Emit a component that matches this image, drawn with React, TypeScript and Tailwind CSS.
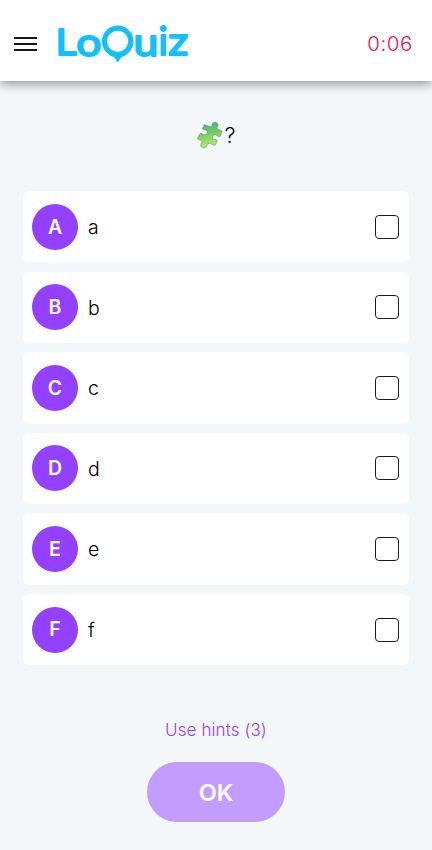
const answers = ["a", "b", "c", "d", "e", "f"];

function Logo() {
  return (
    <svg
      className="ml-[21px] h-[40px] w-[132px] shrink-0 overflow-visible font-['Lato',sans-serif]"
      viewBox="58 24 132 40"
      fill="#10c0ff"
      stroke="#10c0ff"
      strokeLinejoin="round"
      role="img"
    >
      <g strokeWidth="1.9">
        <text x="55.6" y="55.4" fontSize="36.5" textLength="21" lengthAdjust="spacingAndGlyphs">L</text>
        <text x="76.2" y="55.6" fontSize="39" textLength="25.2" lengthAdjust="spacingAndGlyphs">o</text>
        <text x="133.4" y="55.6" fontSize="39" textLength="24.8" lengthAdjust="spacingAndGlyphs">u</text>
        <text x="158.4" y="55.4" fontSize="38" textLength="9.3" lengthAdjust="spacingAndGlyphs">i</text>
        <text x="168.2" y="55.4" fontSize="39" textLength="20" lengthAdjust="spacingAndGlyphs">z</text>
      </g>
      <circle cx="117.7" cy="41.3" r="13.2" fill="none" strokeWidth="5.2" />
      <path d="M110.5 55 Q115 56 116.5 60.5 Q117.7 63 118.9 60.5 Q120.5 56 125 55Z" strokeWidth="0.7" />
    </svg>
  );
}

function Puzzle() {
  return (
    <svg className="h-[28px] w-[28px]" viewBox="0 0 28 28">
      <defs>
        <linearGradient id="leaf" x1="0" y1="0" x2="0.15" y2="1">
          <stop offset="0" stopColor="#45ab76" />
          <stop offset="0.5" stopColor="#7acd62" />
          <stop offset="1" stopColor="#aeea6c" />
        </linearGradient>
      </defs>
      <path
        d="M8.5 3.6 L13.4 5.4 C15.2 6 16 5 16.2 3.6 C16.6 1.2 18.4 .8 20.2 1.6 C22.2 2.6 22.4 4.2 21.6 5.6 C20.8 6.9 21 7.6 22.2 8.3 L26.3 10.3 L24.4 14.6 C23.6 16.2 22.4 16 21.2 14.8 C19.6 13.2 17.2 13.4 16.6 15.4 C16 17.3 17.1 18.8 19 18.6 C20.7 18.4 21.7 19.4 21 20.8 L19 24.6 L14.4 22.6 C12.6 21.9 11.7 22.6 11 24.3 C10 26.9 8 27.5 6.2 26.6 C4.2 25.5 4.4 23.5 5.5 22.2 C6.4 21 6.1 20.1 5 19.5 L1.4 17.6 L3.4 13.4 C4.2 11.9 5.4 12.1 6.7 13.1 C8.4 14.4 10.7 13.6 11.2 11.8 C11.7 9.9 10.6 8.8 8.8 8.9 C6.8 9 6.2 7.9 6.9 6.4Z"
        fill="url(#leaf)"
        stroke="#4f8f5c"
        strokeWidth="0.5"
      />
    </svg>
  );
}

export default function App() {
  return (
    <div className="flex h-[850px] w-[432px] flex-col overflow-hidden bg-[#f3f7fa] font-['Inter','Liberation_Sans',sans-serif] text-black">
      <header className="flex h-[81px] shrink-0 items-center bg-white pr-[19px] pl-[14px] pb-[1px] shadow-[0_3px_10px_rgba(0,0,0,0.4)]">
        <button className="mt-[7px] flex w-[23px] flex-col gap-[4px]" aria-label="Menu">
          <span className="h-[2px] w-full bg-[#17171b]" />
          <span className="h-[2px] w-full bg-[#17171b]" />
          <span className="h-[2px] w-full bg-[#17171b]" />
        </button>
        <div className="mt-[8px] flex"><Logo /></div>
        <span className="mt-[8px] ml-auto text-[20.5px] font-light tracking-[0.6px] text-[#f20d50]">0:06</span>
      </header>

      <main className="flex flex-1 flex-col items-center">
        <div className="mt-[39px] flex h-[30px] w-full items-center justify-center text-[22px] font-light">
          <Puzzle />
          <span>?</span>
        </div>
        <div className="mt-[41px] flex w-[386px] flex-col gap-[9.2px]">
          {answers.map((answer) => (
            <label key={answer} className="flex h-[71.4px] items-center rounded-[6px] bg-white pr-[10px] pl-[9px]">
              <span className="flex h-[46px] w-[46px] items-center justify-center rounded-full bg-[#9340ff] pt-[1px] text-[19.5px] font-semibold text-white uppercase">
                {answer}
              </span>
              <span className="ml-[10px] pt-[2px] text-[19.5px] font-light">{answer}</span>
              <span className="ml-auto h-[24px] w-[24px] rounded-[4px] border border-[#1b1b1b]" />
            </label>
          ))}
        </div>
        <button className="mt-[52px] h-[26px] text-[17px] leading-[26px] font-light tracking-[0.1px] text-[#9340ff]">Use hints (3)</button>
        <button className="mt-[19px] h-[60px] w-[138px] rounded-full bg-[#c29dfd] text-[23.5px] font-semibold text-white">OK</button>
      </main>
    </div>
  );
}
